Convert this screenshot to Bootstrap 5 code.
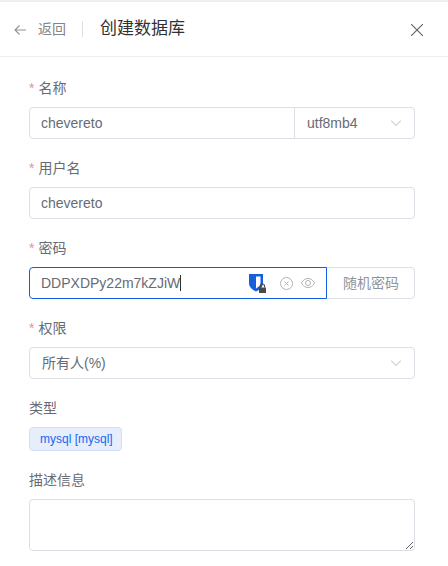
<!DOCTYPE html>
<html lang="zh-CN">
<head>
    <meta charset="UTF-8">
    <title>创建数据库</title>
    <link href="https://cdn.jsdelivr.net/npm/bootstrap@5.3.0/dist/css/bootstrap.min.css" rel="stylesheet">
    <style>
        html, body { height: 566px; overflow: hidden; }
        body { font-family: "Liberation Sans", "Noto Sans CJK SC", sans-serif; font-size: 14px; color: #686b73; background: #fff; }
        .drawer-head { height: 55px; margin-top: 2px; border-bottom: 1px solid #eeeef0; padding: 0 25px 0 14px; box-shadow: 0 -2px 0 #eeeeef; }
        .head-icon { margin-top: 2px; }
        .back-link { color: #82858c; font-size: 14px; margin-left: 12px; }
        .head-sep { width: 1px; height: 16px; background: #dcdfe6; margin: 0 17px 0 16px; }
        .head-title { font-size: 17px; color: #303133; line-height: 24px; }
        .form-area { padding: 21px 33px 0 29px; }
        .field { margin-bottom: 19px; }
        .field-label { height: 20px; line-height: 20px; margin-bottom: 9px; font-size: 14px; }
        .req { color: #f78989; margin-right: 4px; }
        .form-control.db-input, .db-box { height: 32px; border: 1px solid #dcdfe6; border-radius: 4px; padding: 0 11px; font-size: 14px; color: #686b73; box-shadow: none; background: #fff; }
        .form-control.db-input { font-family: inherit; }
        .charset-box { width: 121px; flex: none; margin-left: -1px; padding-left: 12px; padding-right: 13px; border-radius: 0 4px 4px 0; }
        .perm-box { padding-left: 12px; padding-right: 13px; }
        .name-input { border-radius: 4px 0 0 4px !important; }
        .pwd-box { position: relative; z-index: 1; border-color: #0d5fe0; border-radius: 4px 0 0 4px; }
        .caret-bar { display: inline-block; width: 1px; height: 16px; background: #303133; vertical-align: -3px; }
        .shield-icon { margin-right: 14px; }
        .eye-icon { margin-left: 8px; }
        .random-btn { width: 89px; flex: none; height: 32px; margin-left: -1px; padding: 0 0 0 1px; border: 1px solid #dcdfe6; border-radius: 0 4px 4px 0; background: #fff; color: #8f939c; font-size: 14px; }
        .type-tag { height: 24px; line-height: 22px; padding: 0 8px 0 10px; background: #e6eefc; border: 1px solid #cfe0fa; border-radius: 4px; color: #1a66f0; font-size: 12px; }
        textarea.form-control.db-input.desc-box { height: 52px; min-height: 52px; padding: 5px 11px; }
    </style>
</head>
<body>
    <div class="drawer-head d-flex align-items-center">
        <svg class="head-icon" width="12" height="12" viewBox="0 0 12 12" fill="none" stroke="#8e9197" stroke-width="1.1"><path d="M12 6H1M5.500 1.500L1 6l4.500 4.500"/></svg>
        <span class="back-link">返回</span>
        <span class="head-sep"></span>
        <span class="head-title">创建数据库</span>
        <svg class="ms-auto head-icon" width="12" height="12" viewBox="0 0 12 12" fill="none" stroke="#606266" stroke-width="1.1"><path d="M0 0l12 12M12 0L0 12"/></svg>
    </div>

    <div class="form-area">
        <div class="field">
            <div class="field-label"><span class="req">*</span>名称</div>
            <div class="d-flex">
                <input class="form-control db-input name-input" value="chevereto">
                <div class="db-box charset-box d-flex align-items-center justify-content-between">
                    <span>utf8mb4</span>
                    <svg width="10" height="6" viewBox="0 0 10 6" fill="none" stroke="#b4b7be" stroke-width="1"><path d="M0 .5l5 5 5-5"/></svg>
                </div>
            </div>
        </div>

        <div class="field">
            <div class="field-label"><span class="req">*</span>用户名</div>
            <input class="form-control db-input" value="chevereto">
        </div>

        <div class="field">
            <div class="field-label"><span class="req">*</span>密码</div>
            <div class="d-flex">
                <div class="db-box pwd-box flex-grow-1 d-flex align-items-center">
                    <span>DDPXDPy22m7kZJiW<span class="caret-bar"></span></span>
                    <svg class="ms-auto shield-icon" width="17" height="19" viewBox="0 0 17 19">
                        <path d="M0 0h14v9c0 4-3 6.500-7 8.500C3 15.500 0 13 0 9z" fill="#175ddc"/>
                        <path d="M7 2.500h4.500V9c0 2.500-2 4-4.500 5.500z" fill="#fff"/>
                        <rect x="10" y="13.500" width="7" height="5.500" fill="#4a4a4a"/>
                        <path d="M11.500 13.500v-1.500a2 2 0 0 1 4 0v1.500" fill="none" stroke="#4a4a4a" stroke-width="1.100"/>
                    </svg>
                    <svg width="13" height="13" viewBox="0 0 13 13" fill="none" stroke="#b0b3b9" stroke-width="1"><circle cx="6.500" cy="6.500" r="6"/><path d="M4.500 4.500l4 4M8.500 4.500l-4 4"/></svg>
                    <svg class="eye-icon" width="14" height="12" viewBox="0 0 14 12" fill="none" stroke="#b0b3b9" stroke-width="1"><path d="M.5 6C2 3 4.200 1.500 7 1.500S12 3 13.500 6C12 9 9.800 10.500 7 10.500S2 9 .5 6z"/><circle cx="7" cy="6" r="2.500"/></svg>
                </div>
                <button type="button" class="random-btn">随机密码</button>
            </div>
        </div>

        <div class="field">
            <div class="field-label"><span class="req">*</span>权限</div>
            <div class="db-box perm-box d-flex align-items-center justify-content-between">
                <span>所有人(%)</span>
                <svg width="10" height="6" viewBox="0 0 10 6" fill="none" stroke="#b4b7be" stroke-width="1"><path d="M0 .5l5 5 5-5"/></svg>
            </div>
        </div>

        <div class="field">
            <div class="field-label">类型</div>
            <span class="type-tag d-inline-block">mysql [mysql]</span>
        </div>

        <div class="field mb-0">
            <div class="field-label">描述信息</div>
            <textarea class="form-control db-input desc-box"></textarea>
        </div>
    </div>
</body>
</html>
